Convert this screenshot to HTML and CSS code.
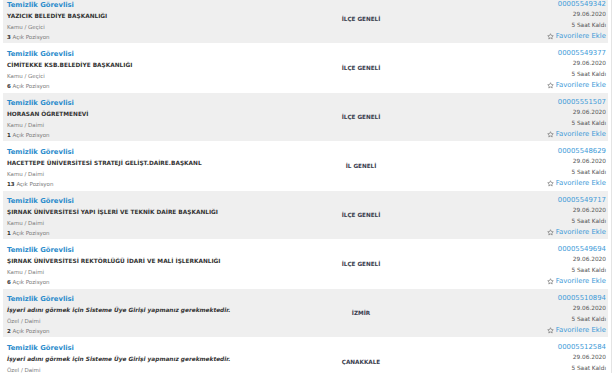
FILE: index.html
```html
<!DOCTYPE html>
<html lang="tr">
<head>
  <meta charset="UTF-8">
  <title>İş İlanları</title>
  <link rel="stylesheet" href="styles.css">
</head>
<body>

<div class="wrap">
<div class="list">

  <div class="job alt">
    <div class="info">
      <a class="title" href="#">Temizlik Görevlisi</a>
      <div class="firm">YAZICIK BELEDİYE BAŞKANLIĞI</div>
      <div class="type">Kamu / Geçici</div>
      <div class="count"><b>3</b> Açık Pozisyon</div>
    </div>
    <div class="place">İLÇE GENELİ</div>
    <div class="meta">
      <a class="no" href="#">00005549342</a>
      <div class="date">29.06.2020</div>
      <div class="left">5 Saat Kaldı</div>
      <a class="fav" href="#"><svg viewBox="0 0 24 24"><path d="M12 2.5l2.9 6.1 6.6.8-4.9 4.5 1.3 6.6L12 17.2l-5.9 3.3 1.3-6.6-4.9-4.5 6.6-.8z"/></svg>Favorilere Ekle</a>
    </div>
  </div>

  <div class="job">
    <div class="info">
      <a class="title" href="#">Temizlik Görevlisi</a>
      <div class="firm">CİMİTEKKE KSB.BELEDİYE BAŞKANLIĞI</div>
      <div class="type">Kamu / Geçici</div>
      <div class="count"><b>6</b> Açık Pozisyon</div>
    </div>
    <div class="place">İLÇE GENELİ</div>
    <div class="meta">
      <a class="no" href="#">00005549377</a>
      <div class="date">29.06.2020</div>
      <div class="left">5 Saat Kaldı</div>
      <a class="fav" href="#"><svg viewBox="0 0 24 24"><path d="M12 2.5l2.9 6.1 6.6.8-4.9 4.5 1.3 6.6L12 17.2l-5.9 3.3 1.3-6.6-4.9-4.5 6.6-.8z"/></svg>Favorilere Ekle</a>
    </div>
  </div>

  <div class="job alt">
    <div class="info">
      <a class="title" href="#">Temizlik Görevlisi</a>
      <div class="firm">HORASAN ÖĞRETMENEVİ</div>
      <div class="type">Kamu / Daimi</div>
      <div class="count"><b>1</b> Açık Pozisyon</div>
    </div>
    <div class="place">İLÇE GENELİ</div>
    <div class="meta">
      <a class="no" href="#">00005551507</a>
      <div class="date">29.06.2020</div>
      <div class="left">5 Saat Kaldı</div>
      <a class="fav" href="#"><svg viewBox="0 0 24 24"><path d="M12 2.5l2.9 6.1 6.6.8-4.9 4.5 1.3 6.6L12 17.2l-5.9 3.3 1.3-6.6-4.9-4.5 6.6-.8z"/></svg>Favorilere Ekle</a>
    </div>
  </div>

  <div class="job">
    <div class="info">
      <a class="title" href="#">Temizlik Görevlisi</a>
      <div class="firm">HACETTEPE ÜNİVERSİTESİ STRATEJİ GELİŞT.DAİRE.BAŞKANL</div>
      <div class="type">Kamu / Daimi</div>
      <div class="count"><b>13</b> Açık Pozisyon</div>
    </div>
    <div class="place">İL GENELİ</div>
    <div class="meta">
      <a class="no" href="#">00005548629</a>
      <div class="date">29.06.2020</div>
      <div class="left">5 Saat Kaldı</div>
      <a class="fav" href="#"><svg viewBox="0 0 24 24"><path d="M12 2.5l2.9 6.1 6.6.8-4.9 4.5 1.3 6.6L12 17.2l-5.9 3.3 1.3-6.6-4.9-4.5 6.6-.8z"/></svg>Favorilere Ekle</a>
    </div>
  </div>

  <div class="job alt">
    <div class="info">
      <a class="title" href="#">Temizlik Görevlisi</a>
      <div class="firm">ŞIRNAK ÜNİVERSİTESİ YAPI İŞLERİ VE TEKNİK DAİRE BAŞKANLIĞI</div>
      <div class="type">Kamu / Daimi</div>
      <div class="count"><b>1</b> Açık Pozisyon</div>
    </div>
    <div class="place">İLÇE GENELİ</div>
    <div class="meta">
      <a class="no" href="#">00005549717</a>
      <div class="date">29.06.2020</div>
      <div class="left">5 Saat Kaldı</div>
      <a class="fav" href="#"><svg viewBox="0 0 24 24"><path d="M12 2.5l2.9 6.1 6.6.8-4.9 4.5 1.3 6.6L12 17.2l-5.9 3.3 1.3-6.6-4.9-4.5 6.6-.8z"/></svg>Favorilere Ekle</a>
    </div>
  </div>

  <div class="job">
    <div class="info">
      <a class="title" href="#">Temizlik Görevlisi</a>
      <div class="firm">ŞIRNAK ÜNİVERSİTESİ REKTÖRLÜĞÜ İDARİ VE MALİ İŞLERKANLIĞI</div>
      <div class="type">Kamu / Daimi</div>
      <div class="count"><b>6</b> Açık Pozisyon</div>
    </div>
    <div class="place">İLÇE GENELİ</div>
    <div class="meta">
      <a class="no" href="#">00005549694</a>
      <div class="date">29.06.2020</div>
      <div class="left">5 Saat Kaldı</div>
      <a class="fav" href="#"><svg viewBox="0 0 24 24"><path d="M12 2.5l2.9 6.1 6.6.8-4.9 4.5 1.3 6.6L12 17.2l-5.9 3.3 1.3-6.6-4.9-4.5 6.6-.8z"/></svg>Favorilere Ekle</a>
    </div>
  </div>

  <div class="job alt">
    <div class="info">
      <a class="title" href="#">Temizlik Görevlisi</a>
      <div class="firm hidden">İşyeri adını görmek için Sisteme Üye Girişi yapmanız gerekmektedir.</div>
      <div class="type">Özel / Daimi</div>
      <div class="count"><b>2</b> Açık Pozisyon</div>
    </div>
    <div class="place">İZMİR</div>
    <div class="meta">
      <a class="no" href="#">00005510894</a>
      <div class="date">29.06.2020</div>
      <div class="left">5 Saat Kaldı</div>
      <a class="fav" href="#"><svg viewBox="0 0 24 24"><path d="M12 2.5l2.9 6.1 6.6.8-4.9 4.5 1.3 6.6L12 17.2l-5.9 3.3 1.3-6.6-4.9-4.5 6.6-.8z"/></svg>Favorilere Ekle</a>
    </div>
  </div>

  <div class="job">
    <div class="info">
      <a class="title" href="#">Temizlik Görevlisi</a>
      <div class="firm hidden">İşyeri adını görmek için Sisteme Üye Girişi yapmanız gerekmektedir.</div>
      <div class="type">Özel / Daimi</div>
      <div class="count"><b>1</b> Açık Pozisyon</div>
    </div>
    <div class="place">ÇANAKKALE</div>
    <div class="meta">
      <a class="no" href="#">00005512584</a>
      <div class="date">29.06.2020</div>
      <div class="left">5 Saat Kaldı</div>
      <a class="fav" href="#"><svg viewBox="0 0 24 24"><path d="M12 2.5l2.9 6.1 6.6.8-4.9 4.5 1.3 6.6L12 17.2l-5.9 3.3 1.3-6.6-4.9-4.5 6.6-.8z"/></svg>Favorilere Ekle</a>
    </div>
  </div>

</div>
</div>

</body>
</html>
```

FILE: styles.css
```css
* { box-sizing: border-box; }
html, body { margin:0; padding:0; background:#fff; overflow:hidden; }
body { font-family: "DejaVu Sans", Verdana, sans-serif; color:#333; }
a { text-decoration:none; }

.wrap { width:612px; border-right:1px solid #e4e4e4; height:373px; overflow:hidden; }
.list { margin:-5px 0 0 3px; width:605px; }

.job { display:grid; grid-template-columns:297px 114px 1fr; height:48px; margin-bottom:1px; padding:4px 2px 0 4px; }
.job.alt { background:#efefef; }

.info { line-height:10.6px; }
.title { display:block; font-size:6.8px; font-weight:bold; color:#2b8ccc; line-height:12px; }
.firm { font-size:5.8px; font-weight:bold; color:#333; white-space:nowrap; }
.firm.hidden { font-style:italic; }
.type { font-size:5.5px; color:#7a7a7a; }
.count { font-size:5.5px; color:#7a7a7a; }
.count b { color:#333; }

.place { align-self:center; text-align:center; font-size:5.7px; font-weight:bold; color:#3b4150; margin-top:-4px; }

.meta { text-align:right; line-height:10.3px; }
.no { display:block; font-size:6.9px; color:#3d9ad8; }
.date, .left { font-size:5.8px; color:#555; }
.fav { display:inline-flex; align-items:center; gap:2px; font-size:6.9px; color:#3d9ad8; }
.fav svg { width:7px; height:7px; fill:none; stroke:#666; stroke-width:2; }
```
